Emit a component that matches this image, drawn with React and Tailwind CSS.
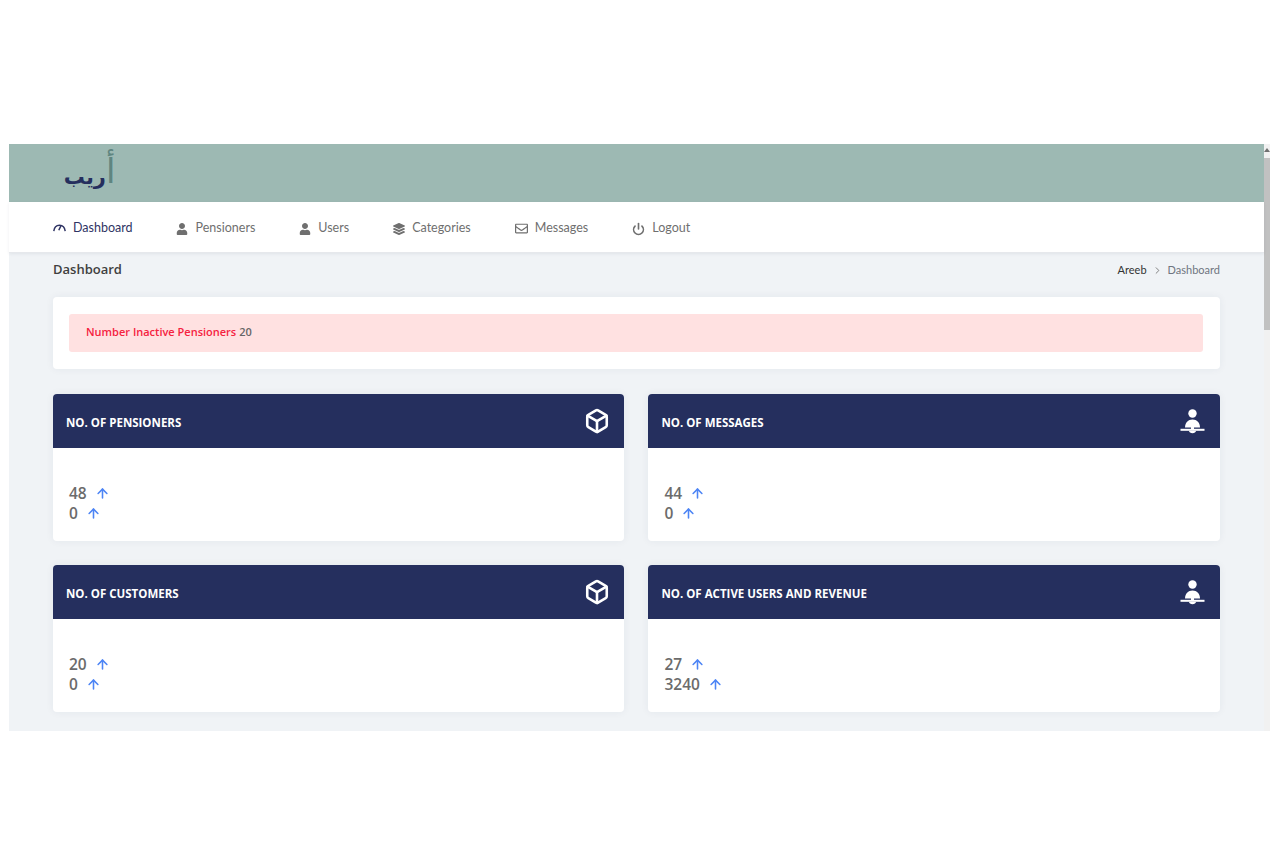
import React from 'react';
import { FaUser, FaLayerGroup, FaRegEnvelope } from 'react-icons/fa';
import { FiBox, FiArrowUp, FiPower, FiChevronRight } from 'react-icons/fi';

const GaugeIcon = () => (
  <svg width="13" height="13" viewBox="0 0 13 13" fill="none" stroke="#2f3464" strokeWidth="1.5">
    <path d="M0.8 9.2C1.2 5.6 3.6 3.2 6.5 3.2S11.8 5.6 12.2 9.2" />
    <path d="M5.8 8.2 8 3.6" />
  </svg>
);

const PersonIcon = () => (
  <svg width="25" height="25" viewBox="0 0 25 25" fill="white">
    <circle cx="12.5" cy="4.500" r="4.200" />
    <path d="M5 18.500c0-5 3.200-8 7.500-8s7.500 3 7.500 8z" />
    <rect x="0.500" y="19.800" width="24" height="2" />
    <rect x="11" y="18" width="3" height="3" />
    <path d="M9 21.800h7c0 1.400-1.600 2.400-3.500 2.400S9 23.200 9 21.800z" />
  </svg>
);

const navItems = [
  { label: 'Dashboard', icon: <GaugeIcon />, active: true },
  { label: 'Pensioners', icon: <FaUser size={12} /> },
  { label: 'Users', icon: <FaUser size={12} /> },
  { label: 'Categories', icon: <FaLayerGroup size={12} /> },
  { label: 'Messages', icon: <FaRegEnvelope size={13} /> },
  { label: 'Logout', icon: <FiPower size={14} strokeWidth={3} /> },
];

const cards = [
  { title: 'NO. OF PENSIONERS', icon: 'box', values: ['48', '0'] },
  { title: 'NO. OF MESSAGES', icon: 'person', values: ['44', '0'] },
  { title: 'NO. OF CUSTOMERS', icon: 'box', values: ['20', '0'] },
  { title: 'NO. OF ACTIVE USERS AND REVENUE', icon: 'person', values: ['27', '3240'] },
];

const StatCard = ({ card }) => (
  <div className="h-[147px] rounded-[4px] bg-white shadow-[0_0_8px_rgba(40,50,80,0.06)] overflow-hidden">
    <div className="h-[54px] bg-[#252f5e] pl-[13px] pr-[15px] flex items-center justify-between">
      <h3 className="pt-[3px] text-[11.5px] font-bold text-white">{card.title}</h3>
      {card.icon === 'box' ? (
        <FiBox size={26} color="white" strokeWidth={2.4} className="-mr-px" />
      ) : (
        <PersonIcon />
      )}
    </div>
    <div className="pt-[36px] pl-[16px]">
      {card.values.map((value, index) => (
        <div key={index} className="h-[20px] flex items-center gap-[8px] text-[15.5px] font-[550] text-[#6b6b6b]">
          <span>{value}</span>
          <FiArrowUp size={15} color="#4d85f5" strokeWidth={2.5} className="-mt-[2px]" />
        </div>
      ))}
    </div>
  </div>
);

const App = () => {
  return (
    <div className="min-h-[853px] bg-white pt-[144px] pl-[9px] pr-[10px] font-['Open_Sans',sans-serif]">
      <div className="flex">
        <div className="flex-1 min-w-0">
          <header className="h-[58px] bg-[#9db9b3] pl-[57px] flex items-center">
            <div dir="rtl" className="w-[47px] h-[58px] flex items-end justify-center pb-[14px] font-['DejaVu_Sans',sans-serif] font-bold leading-none">
              <span className="text-[#5f8580] text-[34px] font-normal">أ</span>
              <span className="text-[#252f5e] text-[21px]">ريب</span>
            </div>
          </header>

          <nav className="h-[51px] bg-white pl-[44px] pt-[3px] flex items-center gap-[43px] border-b border-[#e6e8ec] shadow-[0_1px_3px_rgba(40,50,80,0.08)] relative font-['Lato',sans-serif]">
            {navItems.map((item) => (
              <a
                key={item.label}
                href="#"
                className={`flex items-center gap-[7px] text-[12.5px] ${item.active ? 'text-[#2f3464]' : 'text-[#6f6f6f]'} ${item.label === 'Messages' ? 'ml-[1px]' : ''} ${item.label === 'Logout' ? 'ml-[1px]' : ''}`}
              >
                <span className="w-[13px] flex justify-center">{item.icon}</span>
                {item.label}
              </a>
            ))}
          </nav>

          <main className="h-[478px] bg-[#f0f3f6] px-[44px]">
            <div className="h-[44px] pb-[10px] flex items-center justify-between">
              <h1 className="text-[13px] font-semibold text-[#404040]">Dashboard</h1>
              <div className="flex items-center text-[11px] font-['Lato',sans-serif]">
                <span className="text-[#333333]">Areeb</span>
                <FiChevronRight size={11} color="#777777" className="mx-[5px]" />
                <span className="text-[#6f7580]">Dashboard</span>
              </div>
            </div>

            <div className="h-[72px] rounded-[4px] bg-white pl-[16px] pr-[17px] py-[17px] shadow-[0_0_8px_rgba(40,50,80,0.06)]">
              <div className="h-[38px] rounded-[3px] bg-[#ffe1e1] pl-[17px] pb-[1px] flex items-center text-[11px] font-semibold">
                <span className="text-[#f5223f]">Number Inactive Pensioners</span>
                <span className="ml-[3px] text-[#666666]">20</span>
              </div>
            </div>

            <div className="mt-[25px] grid grid-cols-[571.45px_1fr] gap-x-[24px] gap-y-[24px]">
              {cards.map((card) => (
                <StatCard key={card.title} card={card} />
              ))}
            </div>
          </main>
        </div>

        <div className="w-[6px] h-[587px] bg-[#f1f1f1] pt-[4px]">
          <div className="mx-auto w-0 h-0 border-x-[3px] border-b-[4px] border-x-transparent border-b-[#707070]" />
          <div className="mt-[6px] h-[172px] bg-[#c1c1c1]" />
        </div>
      </div>
    </div>
  );
};

export default App;
